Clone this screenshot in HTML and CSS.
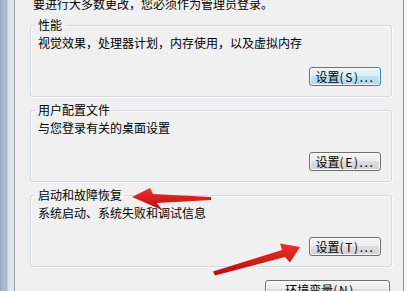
FILE: index.html
```html
<!DOCTYPE html>
<html lang="zh-CN">
<head>
<meta charset="utf-8">
<title>系统属性 - 高级</title>
<link rel="stylesheet" href="styles.css">
</head>
<body>
<div class="edge-left"></div>
<div class="page">
  <p class="note">要进行大多数更改，您必须作为管理员登录。</p>
  <fieldset class="group">
    <legend>性能</legend>
    <p class="desc">视觉效果，处理器计划，内存使用，以及虚拟内存</p>
    <div class="btn-row"><button class="btn btn-focus">设置<span class="acc">(S)...</span></button></div>
  </fieldset>
  <fieldset class="group">
    <legend>用户配置文件</legend>
    <p class="desc">与您登录有关的桌面设置</p>
    <div class="btn-row"><button class="btn">设置<span class="acc">(E)...</span></button></div>
  </fieldset>
  <fieldset class="group">
    <legend>启动和故障恢复</legend>
    <p class="desc">系统启动、系统失败和调试信息</p>
    <div class="btn-row"><button class="btn">设置<span class="acc">(T)...</span></button></div>
  </fieldset>
  <div class="bottom-row"><button class="btn btn-wide">环境变量<span class="acc">(N)...</span></button></div>
</div>
<div class="edge-right"></div>
<svg class="arrows" width="407" height="291" viewBox="0 0 407 291" aria-hidden="true">
  <defs>
    <linearGradient id="red" x1="0" y1="0" x2="0" y2="1">
      <stop offset="0" stop-color="#f0302a"/>
      <stop offset="1" stop-color="#b80d0d"/>
    </linearGradient>
  </defs>
  <polygon points="132,197 150,188 153,194 211,197 211,200 157,203 162,210" fill="url(#red)"/>
  <polygon points="300,247 280,243.5 282,250 213,271.5 215,275.5 285,257 290,262.5" fill="url(#red)"/>
</svg>
</body>
</html>
```

FILE: styles.css
```css
html, body {
  margin: 0;
  padding: 0;
}
body {
  position: relative;
  display: flex;
  width: 407px;
  height: 291px;
  overflow: hidden;
  background: #f0f0f0;
  font-family: "Noto Sans CJK SC", "Noto Sans", sans-serif;
  font-size: 12px;
  color: #000;
}
.edge-left {
  width: 14px;
  flex: none;
  background: linear-gradient(to right, #8fa3bd 0, #a5b8d0 2px, #a9bcd3 7px, #d8e0e9 8px, #e3e8ee 14px);
}
.page {
  width: 388px;
  flex: none;
  border-left: 1px solid #9a9ea6;
  border-right: 1px solid #8f9399;
  background: #f0f0f0;
}
.edge-right {
  flex: 1;
  background: #f7f7f7;
}
.note {
  margin: -4px 0 0 18px;
  line-height: 16px;
  white-space: nowrap;
}
.group {
  margin: 5px 11px 0 15px;
  padding: 2px 10px 10px 7px;
  border: 1px solid #d3d9de;
  border-radius: 3px;
  box-shadow: inset 1px 1px 0 #fbfbfb, 1px 1px 0 #fbfbfb;
}
.group legend {
  margin-left: -3px;
  padding: 0 3px;
  line-height: 16px;
}
.desc {
  margin: 0;
  line-height: 16px;
  white-space: nowrap;
}
.btn-row {
  display: flex;
  justify-content: flex-end;
  margin-top: 16px;
}
.btn {
  box-sizing: border-box;
  width: 72px;
  height: 19px;
  padding: 0;
  border: 1px solid #707070;
  border-radius: 3px;
  background: linear-gradient(#f4f4f4 0%, #ececec 50%, #dedede 50%, #d0d0d0 100%);
  box-shadow: inset 0 0 0 1px #fafafa;
  font-family: "Noto Sans CJK SC", "Noto Sans", sans-serif;
  font-size: 12px;
  line-height: 16px;
  color: #000;
  white-space: nowrap;
}
.btn-focus {
  border-color: #3c7fb1;
  background: linear-gradient(#e9f5fc 0%, #d9effb 50%, #bfe3f7 50%, #a9d6f0 100%);
  box-shadow: inset 0 0 0 1px #f2fafe;
}
.acc {
  letter-spacing: 1.6px;
}
.bottom-row {
  display: flex;
  justify-content: flex-end;
  margin: 13px 13px 0 0;
}
.btn-wide {
  width: 125px;
}
.arrows {
  position: absolute;
  left: 0;
  top: 0;
  pointer-events: none;
}
```
